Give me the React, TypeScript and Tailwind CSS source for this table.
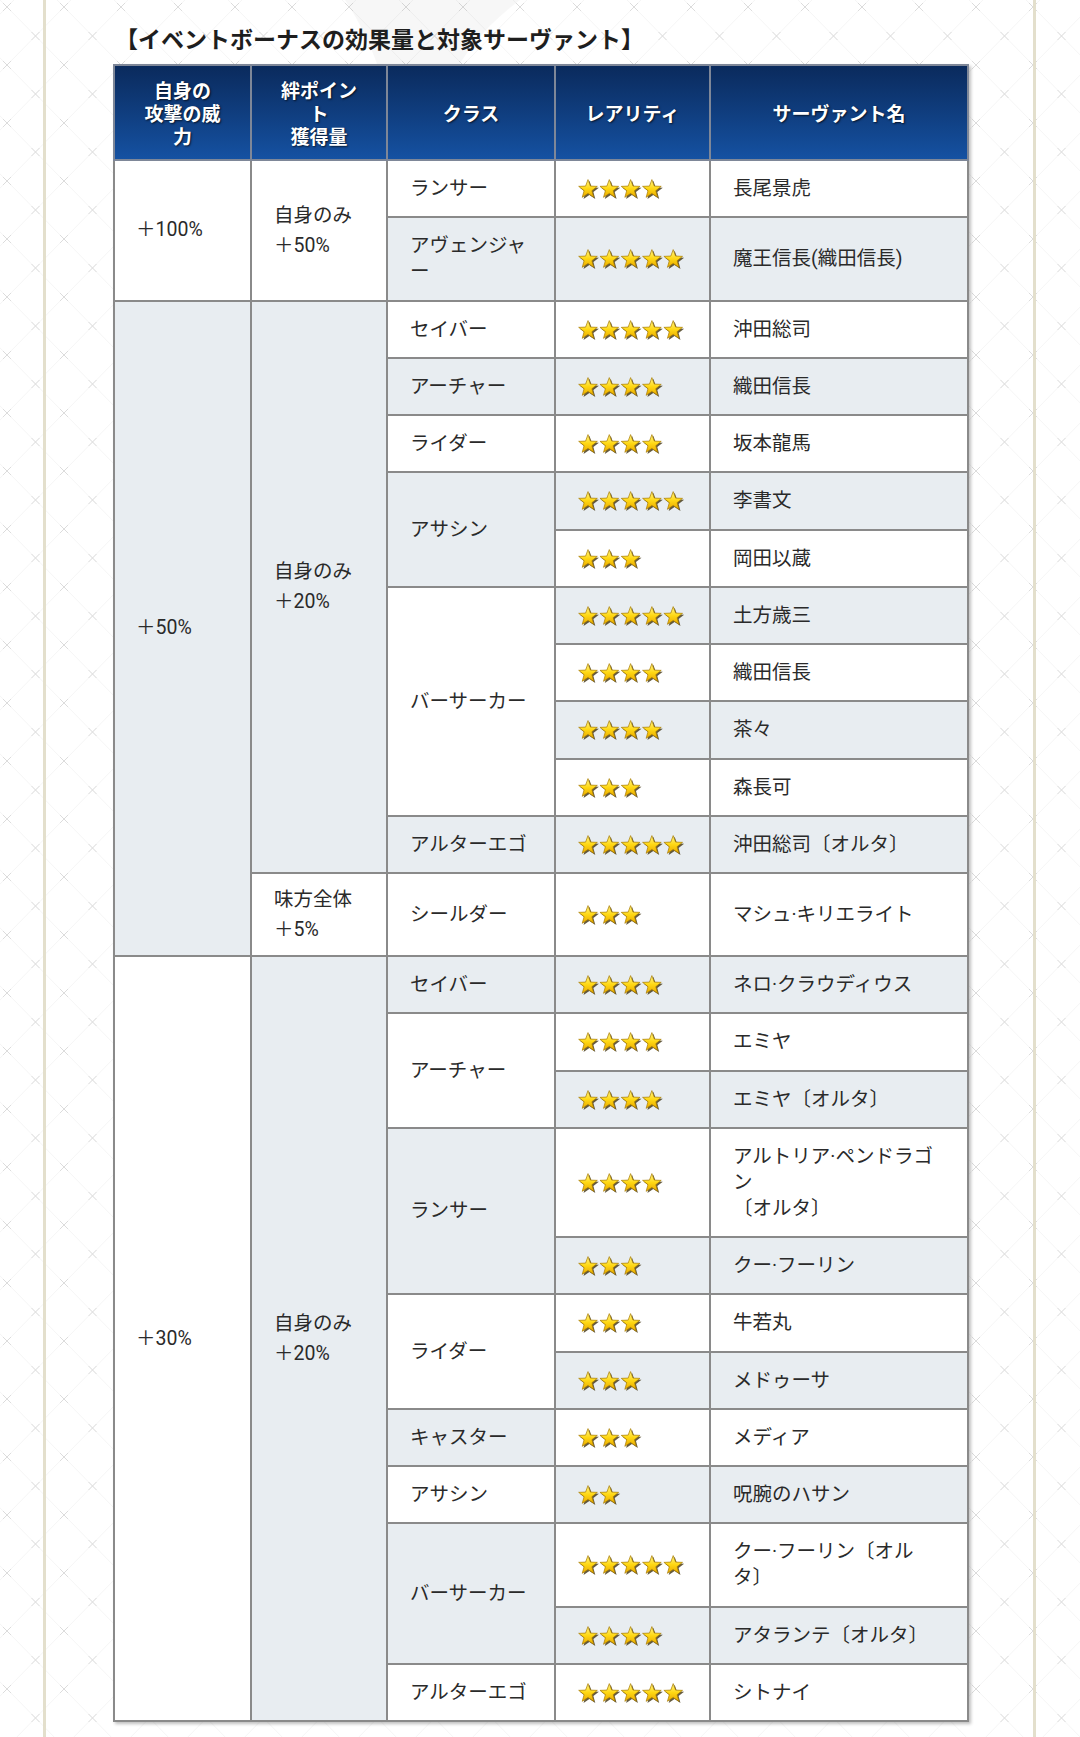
// Event bonus table: attack bonus / bond bonus by class & servant.
import React from 'react';

type Cell = { lines: string[]; rowSpan?: number; gray?: boolean };
type Row = { c1?: Cell; c2?: Cell; c3?: Cell; stars: number; name: string[]; gray: boolean };

const ROWS: Row[] = [
  { c1: { lines: ['＋100%'], rowSpan: 2 }, c2: { lines: ['自身のみ', '＋50%'], rowSpan: 2 }, c3: { lines: ['ランサー'] }, stars: 4, name: ['長尾景虎'], gray: false },
  { c3: { lines: ['アヴェンジャ', 'ー'], gray: true }, stars: 5, name: ['魔王信長(織田信長)'], gray: true },
  { c1: { lines: ['＋50%'], rowSpan: 11, gray: true }, c2: { lines: ['自身のみ', '＋20%'], rowSpan: 10, gray: true }, c3: { lines: ['セイバー'] }, stars: 5, name: ['沖田総司'], gray: false },
  { c3: { lines: ['アーチャー'], gray: true }, stars: 4, name: ['織田信長'], gray: true },
  { c3: { lines: ['ライダー'] }, stars: 4, name: ['坂本龍馬'], gray: false },
  { c3: { lines: ['アサシン'], rowSpan: 2, gray: true }, stars: 5, name: ['李書文'], gray: true },
  { stars: 3, name: ['岡田以蔵'], gray: false },
  { c3: { lines: ['バーサーカー'], rowSpan: 4 }, stars: 5, name: ['土方歳三'], gray: true },
  { stars: 4, name: ['織田信長'], gray: false },
  { stars: 4, name: ['茶々'], gray: true },
  { stars: 3, name: ['森長可'], gray: false },
  { c3: { lines: ['アルターエゴ'], gray: true }, stars: 5, name: ['沖田総司〔オルタ〕'], gray: true },
  { c2: { lines: ['味方全体', '＋5%'] }, c3: { lines: ['シールダー'] }, stars: 3, name: ['マシュ·キリエライト'], gray: false },
  { c1: { lines: ['＋30%'], rowSpan: 12 }, c2: { lines: ['自身のみ', '＋20%'], rowSpan: 12, gray: true }, c3: { lines: ['セイバー'], gray: true }, stars: 4, name: ['ネロ·クラウディウス'], gray: true },
  { c3: { lines: ['アーチャー'], rowSpan: 2 }, stars: 4, name: ['エミヤ'], gray: false },
  { stars: 4, name: ['エミヤ〔オルタ〕'], gray: true },
  { c3: { lines: ['ランサー'], rowSpan: 2, gray: true }, stars: 4, name: ['アルトリア·ペンドラゴ', 'ン', '〔オルタ〕'], gray: false },
  { stars: 3, name: ['クー·フーリン'], gray: true },
  { c3: { lines: ['ライダー'], rowSpan: 2 }, stars: 3, name: ['牛若丸'], gray: false },
  { stars: 3, name: ['メドゥーサ'], gray: true },
  { c3: { lines: ['キャスター'], gray: true }, stars: 3, name: ['メディア'], gray: false },
  { c3: { lines: ['アサシン'] }, stars: 2, name: ['呪腕のハサン'], gray: true },
  { c3: { lines: ['バーサーカー'], rowSpan: 2, gray: true }, stars: 5, name: ['クー·フーリン〔オル', 'タ〕'], gray: false },
  { stars: 4, name: ['アタランテ〔オルタ〕'], gray: true },
  { c3: { lines: ['アルターエゴ'] }, stars: 5, name: ['シトナイ'], gray: false },
];

function starPath(cx: number, cy: number, R: number, r: number) {
  const pts: string[] = [];
  for (let i = 0; i < 10; i++) {
    const a = -Math.PI / 2 + (i * Math.PI) / 5;
    const rad = i % 2 === 0 ? R : r;
    pts.push(`${(cx + rad * Math.cos(a)).toFixed(2)},${(cy + rad * Math.sin(a)).toFixed(2)}`);
  }
  return `M${pts.join('L')}Z`;
}

function Stars({ n }: { n: number }) {
  const pitch = 21.3;
  return (
    <svg width={n * pitch + 2} height={22} viewBox={`0 0 ${n * pitch + 2} 22`} className="block">
      <defs>
        <linearGradient id="starfill" x1="0" y1="0" x2="0" y2="1">
          <stop offset="0" stopColor="#fff58a" />
          <stop offset="0.5" stopColor="#ffd814" />
          <stop offset="1" stopColor="#e9a900" />
        </linearGradient>
      </defs>
      {Array.from({ length: n }).map((_, i) => {
        const cx = 10 + i * pitch;
        return (
          <g key={i}>
            <path d={starPath(cx + 1.4, 11.8, 10, 4.2)} fill="#3f3210" opacity="0.8" />
            <path d={starPath(cx, 10.4, 9.8, 4.1)} fill="url(#starfill)" stroke="#a67a00" strokeWidth="0.7" />
          </g>
        );
      })}
    </svg>
  );
}

const td = 'border-2 border-[#8a8a8a] px-[22px] align-middle text-left';
const bgOf = (gray?: boolean) => (gray ? 'bg-[#e8edf1]' : 'bg-white');

function Lines({ lines }: { lines: string[] }) {
  return (
    <>
      {lines.map((l, i) => (
        <div key={i} className="whitespace-nowrap">{l}</div>
      ))}
    </>
  );
}

export default function App() {
  return (
    <div className="relative w-[1080px] min-h-[1737px] bg-white overflow-hidden font-['Roboto','Noto_Sans_CJK_JP',sans-serif] text-[#2a2a2a]">
      {/* background lattice */}
      <svg className="absolute inset-0 w-full h-full" aria-hidden>
        <defs>
          <pattern id="lattice" width="57" height="58" patternUnits="userSpaceOnUse" x="7" y="7">
            <path d="M0 0L57 58M57 0L0 58" stroke="#f5f5f5" strokeWidth="1" />
            {[[0, 0], [57, 0], [0, 58], [57, 58], [28.5, 29]].map(([x, y], i) => (
              <path key={i} d={`M${x - 4} ${y - 4}L${x + 4} ${y + 4}M${x - 4} ${y + 4}L${x + 4} ${y - 4}`} stroke="#dcdcdc" strokeWidth="1" />
            ))}
          </pattern>
        </defs>
        <rect width="100%" height="100%" fill="url(#lattice)" />
        <path d="M345 0 C375 45 392 100 405 175 L428 175 C428 105 460 45 520 0 Z" fill="#000" opacity="0.03" />
      </svg>

      <div className="relative ml-[43px] w-[993px] min-h-[1737px] border-x-[3px] border-[#e3dfcc] pl-[67px]">
        <h2 className="pt-[22px] pl-[2px] text-[23px] leading-[32px] font-bold text-[#1e1e1e] font-['Noto_Sans_CJK_JP',sans-serif]">
          【イベントボーナスの効果量と対象サーヴァント】
        </h2>

        <table className="mt-[10px] w-[854px] table-fixed border-collapse shadow-[2px_2px_3px_rgba(0,0,0,0.25)]">
          <colgroup>
            <col className="w-[137px]" />
            <col className="w-[136px]" />
            <col className="w-[168px]" />
            <col className="w-[155px]" />
            <col className="w-[258px]" />
          </colgroup>
          <thead>
            <tr className="bg-linear-to-b from-[#0a2a5c] to-[#1552a3]">
              {[['自身の', '攻撃の威', '力'], ['絆ポイン', 'ト', '獲得量'], ['クラス'], ['レアリティ'], ['サーヴァント名']].map((h, i) => (
                <th
                  key={i}
                  className="border-2 border-[#7e8798] py-[12px] px-2 text-center align-middle text-white font-bold text-[19px] leading-[23px] font-['Noto_Sans_CJK_JP',sans-serif] [text-shadow:1px_1px_2px_rgba(0,0,0,0.7)]"
                >
                  <Lines lines={h} />
                </th>
              ))}
            </tr>
          </thead>
          <tbody className="text-[19.5px]">
            {ROWS.map((r, i) => (
              <tr key={i}>
                {r.c1 && (
                  <td rowSpan={r.c1.rowSpan} className={`${td} ${bgOf(r.c1.gray)} leading-[26px] pl-[21px]`}>
                    <Lines lines={r.c1.lines} />
                  </td>
                )}
                {r.c2 && (
                  <td rowSpan={r.c2.rowSpan} className={`${td} ${bgOf(r.c2.gray)} leading-[30px] pt-[11px] pb-[10px]`}>
                    <Lines lines={r.c2.lines} />
                  </td>
                )}
                {r.c3 && (
                  <td rowSpan={r.c3.rowSpan} className={`${td} ${bgOf(r.c3.gray)} leading-[26px] pt-[15px] pb-[14.25px]`}>
                    <Lines lines={r.c3.lines} />
                  </td>
                )}
                <td className={`${td} ${bgOf(r.gray)} pt-[15px] pb-[14.25px]`}>
                  <div className="flex items-center h-[26px] pt-[2px]">
                    <Stars n={r.stars} />
                  </div>
                </td>
                <td className={`${td} ${bgOf(r.gray)} leading-[26px] pt-[15px] pb-[14.25px]`}>
                  <Lines lines={r.name} />
                </td>
              </tr>
            ))}
          </tbody>
        </table>
      </div>
    </div>
  );
}
